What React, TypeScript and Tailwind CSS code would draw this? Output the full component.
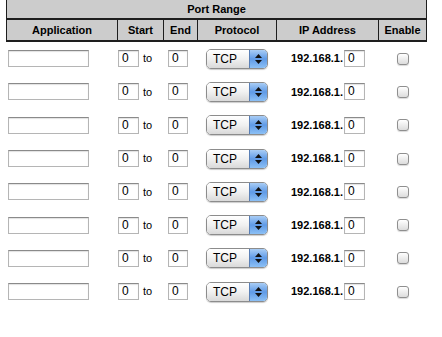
import React from 'react';

const rows = [0, 1, 2, 3, 4, 5, 6, 7];

function TextBox({ w, value }: { w: string; value?: string }) {
  return (
    <div
      className={`${w} h-[17px] border border-[#b5b5b5] border-t-[#8a8a8a] bg-white shadow-[inset_0_1px_1px_rgba(0,0,0,0.12)] text-[12px] leading-[15px] pl-[3px] text-black`}
    >
      {value}
    </div>
  );
}

function AquaSelect() {
  return (
    <div className="flex h-[20px] w-[62px] rounded-[5px] border border-[#8c8c8c] overflow-hidden shadow-[0_1px_1px_rgba(0,0,0,0.2)]">
      <div className="flex-1 bg-gradient-to-b from-[#ffffff] via-[#f1f1f1] to-[#d9d9d9] text-[12px] leading-[18px] pl-[6px] text-black">
        TCP
      </div>
      <div className="w-[18px] border-l border-[#5a7fb5] bg-gradient-to-b from-[#a9cdf5] via-[#5f9ae6] to-[#8cc0f5] flex flex-col items-center justify-center gap-[2px]">
        <svg width="7" height="4" viewBox="0 0 7 4">
          <path d="M3.5 0 L7 4 L0 4 Z" fill="#111" />
        </svg>
        <svg width="7" height="4" viewBox="0 0 7 4">
          <path d="M0 0 L7 0 L3.5 4 Z" fill="#111" />
        </svg>
      </div>
    </div>
  );
}

function Checkbox() {
  return (
    <div className="w-[12px] h-[12px] rounded-[3px] border border-[#8f8f8f] bg-gradient-to-b from-[#ffffff] to-[#dcdcdc] shadow-[0_1px_1px_rgba(0,0,0,0.15)]" />
  );
}

export default function App() {
  return (
    <div className="w-[442px] h-[337px] bg-white font-['Liberation_Sans',Arial,sans-serif] text-black">
      <div className="ml-[6px] w-[421px]">
        {/* header */}
        <div className="border-x border-[#1e1e1e] bg-[#cccccc]">
          <div className="h-[18px] flex items-center justify-center text-[11px] font-bold">Port Range</div>
          <div className="h-[2px] bg-[#1e1e1e]" />
          <div className="h-[20px] flex text-[11px] font-bold">
            <div className="w-[110px] flex items-center justify-center">Application</div>
            <div className="w-px bg-[#1e1e1e]" />
            <div className="w-[45px] flex items-center justify-center">Start</div>
            <div className="w-px bg-[#1e1e1e]" />
            <div className="w-[33px] flex items-center justify-center">End</div>
            <div className="w-px bg-[#1e1e1e]" />
            <div className="w-[78px] flex items-center justify-center">Protocol</div>
            <div className="w-px bg-[#1e1e1e]" />
            <div className="w-[101px] flex items-center justify-center">IP Address</div>
            <div className="w-px bg-[#1e1e1e]" />
            <div className="flex-1 flex items-center justify-center">Enable</div>
          </div>
          <div className="h-[2px] bg-[#1e1e1e]" />
        </div>

        {/* rows */}
        {rows.map((r) => (
          <div key={r} className="h-[33.3px] flex items-center pl-px">
            <div className="w-[111px] pl-[1px]">
              <TextBox w="w-[81px]" />
            </div>
            <div className="w-[46px] flex items-center">
              <TextBox w="w-[21px]" value="0" />
              <span className="ml-[4px] text-[11px]">to</span>
            </div>
            <div className="w-[34px] pl-[4px]">
              <TextBox w="w-[20px]" value="0" />
            </div>
            <div className="w-[79px] pl-[8px]">
              <AquaSelect />
            </div>
            <div className="w-[102px] flex items-center justify-center">
              <span className="text-[11px] font-bold mr-[1px]">192.168.1.</span>
              <TextBox w="w-[21px]" value="0" />
            </div>
            <div className="flex-1 flex justify-center">
              <Checkbox />
            </div>
          </div>
        ))}
      </div>
    </div>
  );
}
